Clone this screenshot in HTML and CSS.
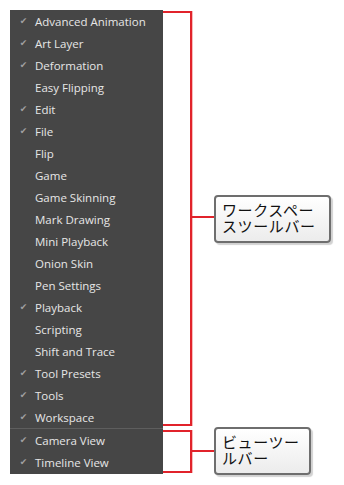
FILE: index.html
```html
<!DOCTYPE html>
<html>
<head>
<meta charset="utf-8">
<link rel="stylesheet" href="styles.css">
</head>
<body>
<div class="stage">
  <div class="menu">
    <div class="group">
      <div class="item on"><span class="chk">✔</span><span class="lbl">Advanced Animation</span></div>
      <div class="item on"><span class="chk">✔</span><span class="lbl">Art Layer</span></div>
      <div class="item on"><span class="chk">✔</span><span class="lbl">Deformation</span></div>
      <div class="item"><span class="chk"></span><span class="lbl">Easy Flipping</span></div>
      <div class="item on"><span class="chk">✔</span><span class="lbl">Edit</span></div>
      <div class="item on"><span class="chk">✔</span><span class="lbl">File</span></div>
      <div class="item"><span class="chk"></span><span class="lbl">Flip</span></div>
      <div class="item"><span class="chk"></span><span class="lbl">Game</span></div>
      <div class="item"><span class="chk"></span><span class="lbl">Game Skinning</span></div>
      <div class="item"><span class="chk"></span><span class="lbl">Mark Drawing</span></div>
      <div class="item"><span class="chk"></span><span class="lbl">Mini Playback</span></div>
      <div class="item"><span class="chk"></span><span class="lbl">Onion Skin</span></div>
      <div class="item"><span class="chk"></span><span class="lbl">Pen Settings</span></div>
      <div class="item on"><span class="chk">✔</span><span class="lbl">Playback</span></div>
      <div class="item"><span class="chk"></span><span class="lbl">Scripting</span></div>
      <div class="item"><span class="chk"></span><span class="lbl">Shift and Trace</span></div>
      <div class="item on"><span class="chk">✔</span><span class="lbl">Tool Presets</span></div>
      <div class="item on"><span class="chk">✔</span><span class="lbl">Tools</span></div>
      <div class="item on"><span class="chk">✔</span><span class="lbl">Workspace</span></div>
    </div>
    <div class="sep"></div>
    <div class="group">
      <div class="item on"><span class="chk">✔</span><span class="lbl">Camera View</span></div>
      <div class="item on"><span class="chk">✔</span><span class="lbl">Timeline View</span></div>
    </div>
  </div>

  <div class="bracket b1"></div>
  <div class="stub s1"></div>
  <div class="callout c1"><div class="ln">ワークスペー</div><div class="ln">スツールバー</div></div>

  <div class="bracket b2"></div>
  <div class="stub s2"></div>
  <div class="callout c2"><div class="ln">ビューツー</div><div class="ln">ルバー</div></div>
</div>
</body>
</html>
```

FILE: styles.css
```css
html, body {
  margin: 0;
  padding: 0;
  background: #ffffff;
}
.stage {
  position: relative;
  width: 344px;
  height: 485px;
  padding: 10px 0 0 10px;
  box-sizing: border-box;
}
.menu {
  width: 153px;
  background: #464646;
  padding-bottom: 1px;
  font-family: "Open Sans", "Noto Sans", sans-serif;
  font-size: 11.5px;
  color: #e6e6e6;
}
.item {
  height: 22px;
  display: flex;
  align-items: center;
}
.chk {
  width: 25px;
  flex: none;
  text-align: center;
  font-family: "DejaVu Sans", sans-serif;
  font-size: 9px;
  color: #a0a0a0;
  padding-left: 2px;
  box-sizing: border-box;
}
.lbl {
  white-space: nowrap;
}
.sep {
  height: 1px;
  background: #5e5e5e;
}
.bracket {
  position: absolute;
  left: 163px;
  width: 27px;
  border: 2px solid #e1232b;
  border-left: none;
  box-shadow: 1px 0 0 rgba(240, 120, 120, 0.5);
}
.b1 {
  top: 11px;
  height: 411px;
}
.b2 {
  top: 430px;
  height: 39px;
}
.stub {
  position: absolute;
  left: 192px;
  width: 22px;
  height: 2px;
  background: #e1232b;
}
.s1 { top: 216px; }
.s2 { top: 450px; }
.callout {
  position: absolute;
  left: 214px;
  box-sizing: border-box;
  border: 2px solid #6e6e6e;
  border-radius: 4px;
  background: linear-gradient(#ffffff, #ececec);
  box-shadow: 2px 2px 1px rgba(0, 0, 0, 0.18);
  font-family: "Noto Sans CJK JP", sans-serif;
  font-size: 15px;
  letter-spacing: 0.6px;
  color: #111;
  padding: 5px 0 0 6px;
  white-space: nowrap;
}
.ln {
  height: 16px;
  line-height: 16px;
}
.c1 {
  top: 195px;
  width: 117px;
  height: 48px;
}
.c2 {
  top: 427px;
  width: 97px;
  height: 48px;
}
```
